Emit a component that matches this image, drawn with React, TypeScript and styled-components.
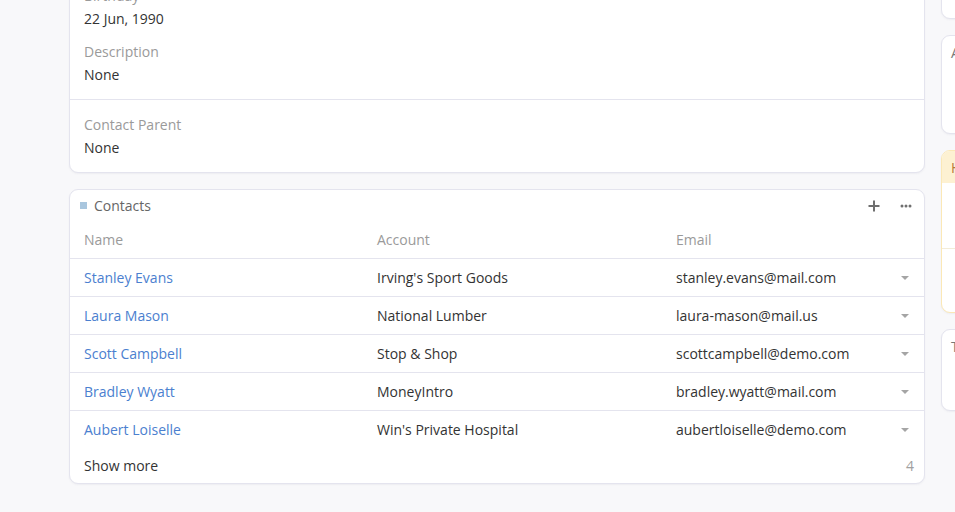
import React from "react";
import styled, {createGlobalStyle} from "styled-components";

const GlobalStyle = createGlobalStyle`
html, body {
  margin: 0;
  padding: 0;
  background-color: #f8f8fa;
  font-family: "Open Sans", "Liberation Sans", sans-serif;
  font-size: 14px;
  color: #333;
  overflow: hidden;
}
`;

const border = "#e4e4ee";

const Page = styled.div`
display: flex;
align-items: flex-start;
gap: 16px;
height: 512px;
padding-left: 69px;
overflow: hidden;
`;

const MainColumn = styled.div`
width: 856px;
flex-shrink: 0;
display: flex;
flex-direction: column;
gap: 16px;
margin-top: -30px;
`;

const SideColumn = styled.div`
width: 300px;
flex-shrink: 0;
display: flex;
flex-direction: column;
gap: 16px;
margin-top: -60px;
`;

const Card = styled.div`
background-color: #fff;
border: 1px solid ${border};
border-radius: 9px;
box-shadow: 0 1px 2px rgba(60, 60, 100, 0.06);
overflow: hidden;
`;

const Section = styled.div<{ $last?: boolean }>`
padding: 15px 14px 14px 14px;
border-bottom: ${(p) => (p.$last ? "none" : `1px solid ${border}`)};
display: flex;
flex-direction: column;
gap: 13px;
`;

const Field = styled.div`
display: flex;
flex-direction: column;
gap: 3px;
line-height: 20px;
`;

const Label = styled.div`
color: #9a9a9a;
`;

const Value = styled.div`
color: #333;
`;

const CardHeader = styled.div`
height: 31px;
display: flex;
align-items: center;
padding: 0 7px 0 10px;
color: #666;
font-size: 14px;
`;

const HeaderMark = styled.span`
width: 7px;
height: 7px;
background-color: #a9c6de;
margin-right: 7px;
`;

const HeaderTitle = styled.span`
flex: 1;
`;

const IconButton = styled.span`
width: 22px;
height: 22px;
display: flex;
align-items: center;
justify-content: center;
margin-left: 10px;
`;

const Row = styled.div`
display: grid;
grid-template-columns: 293px 299px 1fr 38px;
align-items: center;
height: 37px;
border-bottom: 1px solid ${border};
&:last-of-type {
  border-bottom: none;
}
`;

const Cell = styled.div<{ $kind?: "head" | "link" | "text" }>`
padding-left: 14px;
white-space: nowrap;
color: ${(p) =>
  p.$kind === "head" ? "#9a9a9a" : p.$kind === "link" ? "#4b80cf" : "#333"};
`;

const Caret = styled.div`
display: flex;
justify-content: center;
&::after {
  content: "";
  border-left: 4px solid transparent;
  border-right: 4px solid transparent;
  border-top: 4px solid #a5a5a5;
}
`;

const Rows = styled.div``;

const Footer = styled.div`
height: 35px;
display: flex;
align-items: center;
justify-content: space-between;
padding: 0 10px 0 14px;
color: #333;
`;

const Count = styled.span`
color: #a0a0a0;
`;

const SideCard = styled(Card)<{ $height: number; $tone?: "warn" }>`
height: ${(p) => p.$height}px;
border-color: ${(p) => (p.$tone === "warn" ? "#fbe8b6" : border)};
box-sizing: border-box;
`;

const SideHeader = styled.div<{ $tone?: "warn" | "link" }>`
height: 32px;
display: flex;
align-items: center;
padding: 0 9px;
color: ${(p) =>
  p.$tone === "warn" ? "#b57a39" : p.$tone === "link" ? "#4b80cf" : "#777"};
background-color: ${(p) => (p.$tone === "warn" ? "#fdf1d2" : "transparent")};
`;

const SideBody = styled.div<{ $height: number }>`
height: ${(p) => p.$height}px;
border-bottom: 1px solid #f3ecd8;
`;

const contacts = [
  {name: "Stanley Evans", account: "Irving's Sport Goods", email: "stanley.evans@mail.com"},
  {name: "Laura Mason", account: "National Lumber", email: "laura-mason@mail.us"},
  {name: "Scott Campbell", account: "Stop & Shop", email: "scottcampbell@demo.com"},
  {name: "Bradley Wyatt", account: "MoneyIntro", email: "bradley.wyatt@mail.com"},
  {name: "Aubert Loiselle", account: "Win's Private Hospital", email: "aubertloiselle@demo.com"},
];

const PlusIcon = () => (
  <svg width="12" height="12" viewBox="0 0 12 12">
    <path d="M6 0.5v11M0.5 6h11" stroke="#6f6f6f" strokeWidth="2" />
  </svg>
);

const DotsIcon = () => (
  <svg width="12" height="4" viewBox="0 0 12 4">
    <circle cx="2" cy="2" r="1.5" fill="#6f6f6f" />
    <circle cx="6" cy="2" r="1.5" fill="#6f6f6f" />
    <circle cx="10" cy="2" r="1.5" fill="#6f6f6f" />
  </svg>
);

const App = () => {
  return (
    <Page>
      <GlobalStyle />
      <MainColumn>
        <Card>
          <Section>
            <Field>
              <Label>Birthday</Label>
              <Value>22 Jun, 1990</Value>
            </Field>
            <Field>
              <Label>Description</Label>
              <Value>None</Value>
            </Field>
          </Section>
          <Section $last>
            <Field>
              <Label>Contact Parent</Label>
              <Value>None</Value>
            </Field>
          </Section>
        </Card>
        <Card>
          <CardHeader>
            <HeaderMark />
            <HeaderTitle>Contacts</HeaderTitle>
            <IconButton><PlusIcon /></IconButton>
            <IconButton><DotsIcon /></IconButton>
          </CardHeader>
          <Row>
            <Cell $kind="head">Name</Cell>
            <Cell $kind="head">Account</Cell>
            <Cell $kind="head">Email</Cell>
            <div />
          </Row>
          <Rows>
            {contacts.map((c) => (
              <Row key={c.name}>
                <Cell $kind="link">{c.name}</Cell>
                <Cell>{c.account}</Cell>
                <Cell>{c.email}</Cell>
                <Caret />
              </Row>
            ))}
          </Rows>
          <Footer>
            <span>Show more</span>
            <Count>4</Count>
          </Footer>
        </Card>
      </MainColumn>
      <SideColumn>
        <SideCard $height={79}>
          <SideHeader />
          <SideHeader $tone="link">Tasks</SideHeader>
        </SideCard>
        <SideCard $height={99}>
          <SideHeader>Activities</SideHeader>
        </SideCard>
        <SideCard $height={163} $tone="warn">
          <SideHeader $tone="warn">History</SideHeader>
          <SideBody $height={65} />
        </SideCard>
        <SideCard $height={82}>
          <SideHeader>Tasks</SideHeader>
        </SideCard>
      </SideColumn>
    </Page>
  );
};

export default App;
